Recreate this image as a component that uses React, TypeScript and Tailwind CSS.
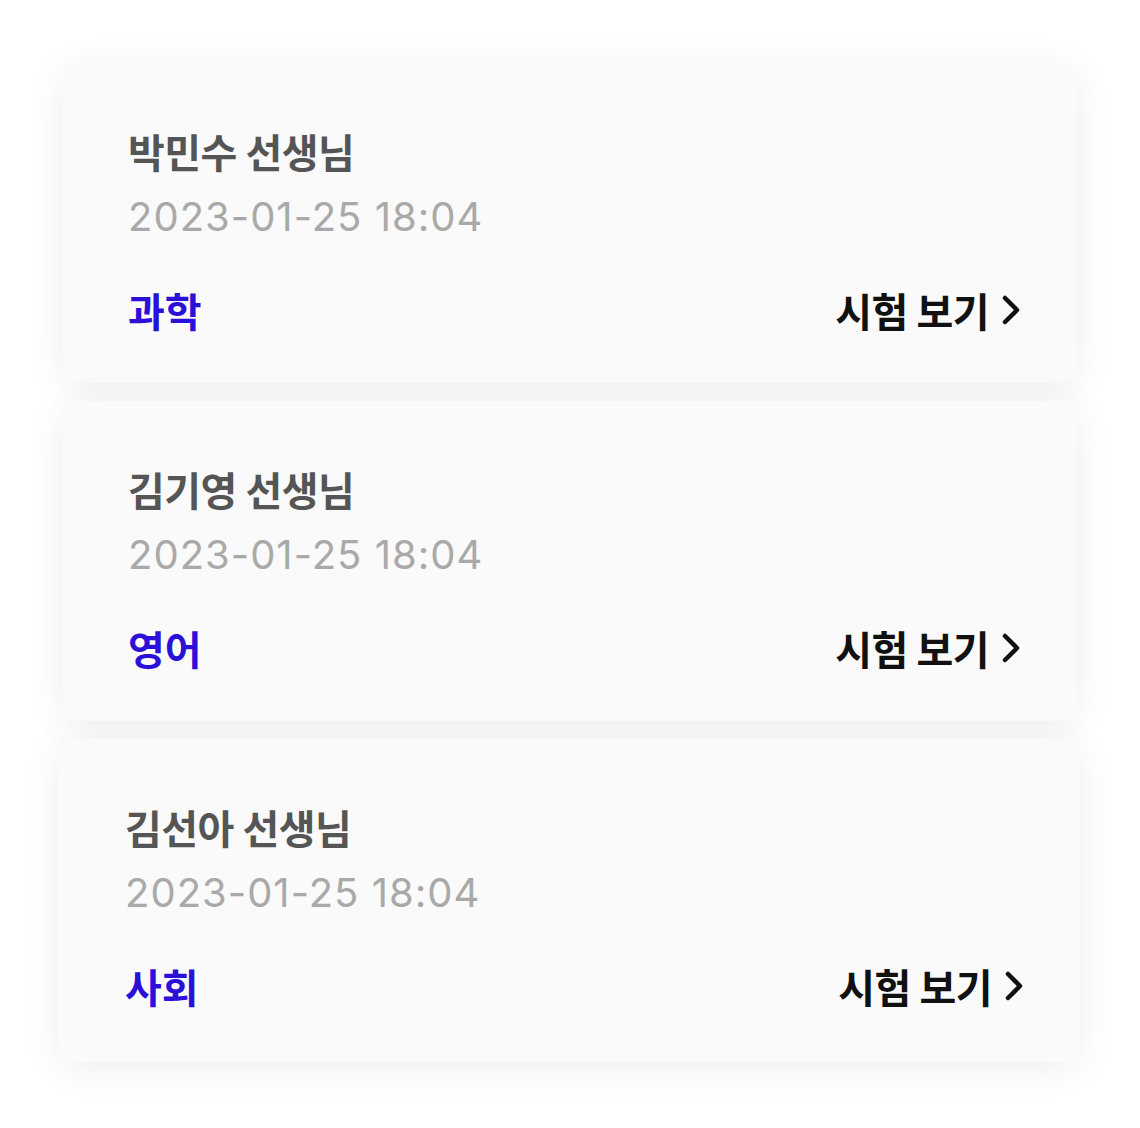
import React from "react";

type Exam = {
  teacher: string;
  date: string;
  subject: string;
  box: string;
};

const exams: Exam[] = [
  {
    teacher: "박민수 선생님",
    date: "2023-01-25 18:04",
    subject: "과학",
    box: "ml-[63px] w-[1014px] h-[320px]",
  },
  {
    teacher: "김기영 선생님",
    date: "2023-01-25 18:04",
    subject: "영어",
    box: "ml-[63px] w-[1014px] h-[320px]",
  },
  {
    teacher: "김선아 선생님",
    date: "2023-01-25 18:04",
    subject: "사회",
    box: "ml-[58px] w-[1022px] h-[323px] pl-[67px] pr-[53px]",
  },
];

const Chevron = () => (
  <svg width="22" height="34" viewBox="0 0 22 34" fill="none">
    <polyline
      points="5,5 17,17 5,29"
      stroke="#111"
      strokeWidth="4.5"
      strokeLinecap="round"
      strokeLinejoin="round"
    />
  </svg>
);

const ExamCard = ({ exam }: { exam: Exam }) => (
  <div
    className={
      "flex flex-col rounded-[18px] bg-[#fafafa] pl-[65px] pr-[55px] pt-[64px] shadow-[0_6px_40px_rgba(0,0,0,0.07)] " +
      exam.box
    }
  >
    <p className="text-[40px] leading-[48px] font-semibold text-[#555555] tracking-[-0.5px]">
      {exam.teacher}
    </p>
    <p
      className="mt-[18px] text-[40px] leading-[48px] text-[#a9a9a9] tracking-[1px]"
      style={{ fontFamily: "Inter, 'Noto Sans CJK KR', sans-serif" }}
    >
      {exam.date}
    </p>
    <div className="mt-[45px] flex items-center justify-between">
      <span className="text-[40px] leading-[48px] font-bold text-[#2a10d8]">
        {exam.subject}
      </span>
      <button className="flex items-center gap-[11px] text-[40px] leading-[48px] font-bold text-[#111] tracking-[-0.5px]">
        시험 보기
        <Chevron />
      </button>
    </div>
  </div>
);

export default function App() {
  return (
    <div
      className="min-h-[1128px] w-[1140px] bg-white pt-[63px]"
      style={{ fontFamily: "'Noto Sans CJK KR', 'Noto Sans', sans-serif" }}
    >
      <div className="flex flex-col gap-[18px]">
        {exams.map((exam, i) => (
          <ExamCard exam={exam} key={exam.teacher + i} />
        ))}
      </div>
    </div>
  );
}
